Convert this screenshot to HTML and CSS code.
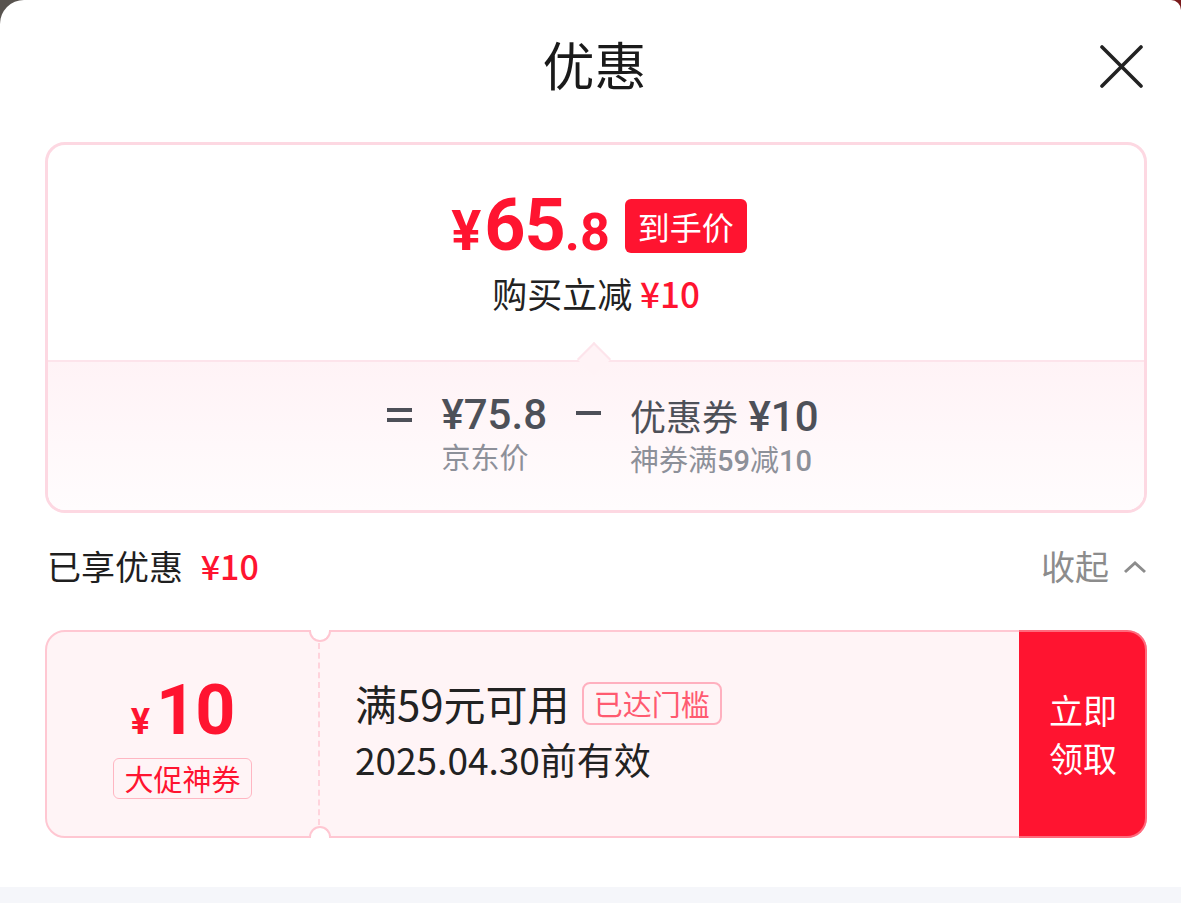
FILE: index.html
```html
<!DOCTYPE html>
<html lang="zh-CN">
<head>
<meta charset="utf-8">
<title>优惠</title>
<link rel="stylesheet" href="styles.css">
</head>
<body>
<div class="sheet">
  <header class="head">
    <h1 class="title">优惠</h1>
    <button class="close" aria-label="关闭">
      <svg width="43" height="43" viewBox="0 0 43 43"><path d="M2 2 L41 41 M41 2 L2 41" stroke="#222" stroke-width="3.6" stroke-linecap="round" fill="none"/></svg>
    </button>
  </header>

  <section class="summary">
    <div class="summary-top">
      <div class="final">
        <span class="final-cur">¥</span><span class="final-int">65</span><span class="final-dec">.8</span>
        <span class="final-badge">到手价</span>
      </div>
      <div class="saving">购买立减 <span class="red">¥10</span></div>
    </div>
    <div class="summary-bottom">
      <span class="arrow"></span>
      <div class="calc">
        <span class="eq"></span>
        <div class="term">
          <div class="term-main">¥75.8</div>
          <div class="term-sub">京东价</div>
        </div>
        <span class="minus"></span>
        <div class="term">
          <div class="term-main"><span class="cn">优惠券</span> ¥10</div>
          <div class="term-sub">神券满<b>59</b>减<b>10</b></div>
        </div>
      </div>
    </div>
  </section>

  <div class="enjoy">
    <div class="enjoy-label">已享优惠 <span class="red num">¥10</span></div>
    <div class="fold">收起
      <svg width="24" height="14" viewBox="0 0 24 14"><path d="M2 12 L12 3 L22 12" stroke="#8c8c8c" stroke-width="3" fill="none"/></svg>
    </div>
  </div>

  <div class="coupon">
    <span class="notch notch-top"></span>
    <span class="notch notch-bottom"></span>
    <div class="coupon-left">
      <div class="coupon-amount"><span class="ca-cur">¥</span><span class="ca-num">10</span></div>
      <div class="coupon-tag">大促神券</div>
    </div>
    <div class="coupon-mid">
      <div class="cm-line1">满59元可用<span class="cm-tag">已达门槛</span></div>
      <div class="cm-line2">2025.04.30前有效</div>
    </div>
    <button class="coupon-btn">立即<br>领取</button>
  </div>

  <div class="footer-strip"></div>
</div>
</body>
</html>
```

FILE: styles.css
```css
* { box-sizing: border-box; }
html, body { margin: 0; padding: 0; }
body {
  width: 1181px;
  height: 903px;
  overflow: hidden;
  background: linear-gradient(90deg, #58534f 0%, #5a4a48 60%, #7a1a1c 100%);
  font-family: "Noto Sans CJK SC", "Noto Sans", sans-serif;
  color: #222;
}
.sheet {
  position: relative;
  height: 903px;
  background: #fff;
  border-radius: 24px 10px 0 0;
  display: flex;
  flex-direction: column;
}
.red { color: #ff1430; }

/* header */
.head {
  position: relative;
  height: 142px;
  display: flex;
  justify-content: center;
  padding-top: 31px;
}
.title {
  margin: 0;
  font-size: 52px;
  line-height: 66px;
  font-weight: 400;
  color: #1a1a1a;
  padding-left: 8px;
}
.close {
  position: absolute;
  right: 38px;
  top: 45px;
  width: 43px;
  height: 43px;
  padding: 0;
  border: 0;
  background: none;
}
.close svg { display: block; }

/* summary card */
.summary {
  margin: 0 34px 0 45px;
  border: 3px solid #fdd8e2;
  border-radius: 20px;
}
.summary-top {
  height: 215px;
  display: flex;
  flex-direction: column;
  align-items: center;
  padding-top: 54px;
}
.final {
  display: flex;
  align-items: baseline;
  height: 54px;
  color: #ff1430;
  font-family: Roboto, "Noto Sans", sans-serif;
  font-weight: 700;
  padding-left: 6px;
}
.final-cur { font-size: 56px; line-height: 54px; margin-right: 3px; }
.final-int { font-size: 72px; line-height: 54px; letter-spacing: -1px; }
.final-dec { font-size: 52px; line-height: 54px; }
.final-badge {
  align-self: center;
  margin-left: 15px;
  height: 54px;
  padding: 0 13px;
  background: #ff1430;
  color: #fff;
  border-radius: 6px;
  font-family: "Noto Sans CJK SC", sans-serif;
  font-weight: 400;
  font-size: 32px;
  line-height: 54px;
}
.saving {
  margin-top: 20px;
  font-size: 35px;
  line-height: 40px;
  color: #222;
}
.saving .red { font-family: "Noto Sans CJK SC", sans-serif; font-weight: 500; font-size: 35px; }

.summary-bottom {
  position: relative;
  height: 150px;
  border-top: 2px solid #fde4eb;
  border-radius: 0 0 17px 17px;
  background: linear-gradient(180deg, #fff3f6 0%, #fffcfd 100%);
}
.arrow {
  position: absolute;
  left: 50%;
  top: -15px;
  width: 24px;
  height: 24px;
  margin-left: -14px;
  transform: rotate(45deg);
  background: #fff3f6;
  border-top: 2px solid #fde4eb;
  border-left: 2px solid #fde4eb;
}
.calc {
  display: flex;
  justify-content: center;
  align-items: flex-start;
  padding-top: 30px;
  gap: 29px;
  padding-left: 14px;
}
.eq {
  width: 25px;
  height: 14px;
  margin-top: 16px;
  border-top: 4px solid #4d5058;
  border-bottom: 4px solid #4d5058;
}
.minus {
  width: 25px;
  height: 4px;
  margin-top: 19px;
  background: #4d5058;
}
.term-main {
  font-family: Roboto, "Noto Sans CJK SC", sans-serif;
  font-weight: 500;
  font-size: 42px;
  line-height: 46px;
  color: #4d5058;
}
.term-main .cn {
  font-family: "Noto Sans CJK SC", sans-serif;
  font-weight: 400;
  font-size: 36px;
}
.term-sub {
  margin-top: 0;
  font-size: 29px;
  line-height: 36px;
  color: #8d9099;
}
.term-sub b { font-family: Roboto, sans-serif; font-weight: 500; }

/* enjoyed row */
.enjoy {
  margin: 27px 34px 0 47px;
  height: 50px;
  display: flex;
  justify-content: space-between;
  align-items: center;
  font-size: 34px;
}
.enjoy-label { color: #1f1f1f; }
.enjoy-label .num { font-family: "Noto Sans CJK SC", sans-serif; font-weight: 500; font-size: 34px; margin-left: 10px; }
.fold {
  display: flex;
  align-items: center;
  gap: 14px;
  color: #8c8c8c;
}
.fold svg { margin-top: 4px; }

/* coupon */
.coupon {
  position: relative;
  margin: 40px 34px 0 45px;
  height: 208px;
  border: 2px solid #ffc7d2;
  border-radius: 20px;
  background: #fff4f6;
  display: flex;
}
.notch {
  position: absolute;
  left: 262px;
  width: 22px;
  height: 12px;
  background: #fff;
  border: 2px solid #ffc7d2;
}
.notch-top {
  top: -2px;
  border-top: 0;
  border-radius: 0 0 11px 11px;
}
.notch-bottom {
  bottom: -2px;
  border-bottom: 0;
  border-radius: 11px 11px 0 0;
}
.coupon-left {
  width: 273px;
  margin: 11px 0;
  border-right: 2px dashed #ffd3dc;
  display: flex;
  flex-direction: column;
  align-items: center;
  justify-content: center;
  padding-top: 6px;
}
.coupon-amount {
  display: flex;
  align-items: baseline;
  color: #ff1430;
  font-family: Roboto, sans-serif;
  font-weight: 700;
  line-height: 1;
}
.ca-cur { font-size: 36px; margin-right: 6px; }
.ca-num { font-size: 70px; letter-spacing: -1px; }
.coupon-tag {
  margin-top: 13px;
  height: 41px;
  padding: 0 10px;
  border: 1px solid #ffb6c2;
  border-radius: 6px;
  color: #ff1430;
  font-size: 29px;
  line-height: 39px;
}
.coupon-mid {
  flex: 1;
  padding-left: 35px;
  padding-bottom: 6px;
  display: flex;
  flex-direction: column;
  justify-content: center;
  color: #222;
}
.cm-line1 {
  display: flex;
  align-items: center;
  font-size: 42px;
  line-height: 56px;
}
.cm-tag {
  margin-left: 12px;
  height: 43px;
  padding: 0 10px;
  border: 2px solid #ffb0bf;
  border-radius: 8px;
  color: #ff5a70;
  font-size: 29px;
  line-height: 39px;
}
.cm-line2 {
  font-size: 37px;
  line-height: 56px;
}
.coupon-btn {
  width: 128px;
  margin: -2px -2px -2px 0;
  border: 2px solid #ff6a7c;
  border-left: 0;
  border-radius: 0 20px 20px 0;
  background: #ff1430;
  color: #fff;
  font-family: "Noto Sans CJK SC", sans-serif;
  font-size: 34px;
  line-height: 48px;
  padding: 0 0 0 2px;
  text-align: center;
}

.footer-strip {
  margin-top: auto;
  height: 16px;
  background: #f5f6fa;
}
```
